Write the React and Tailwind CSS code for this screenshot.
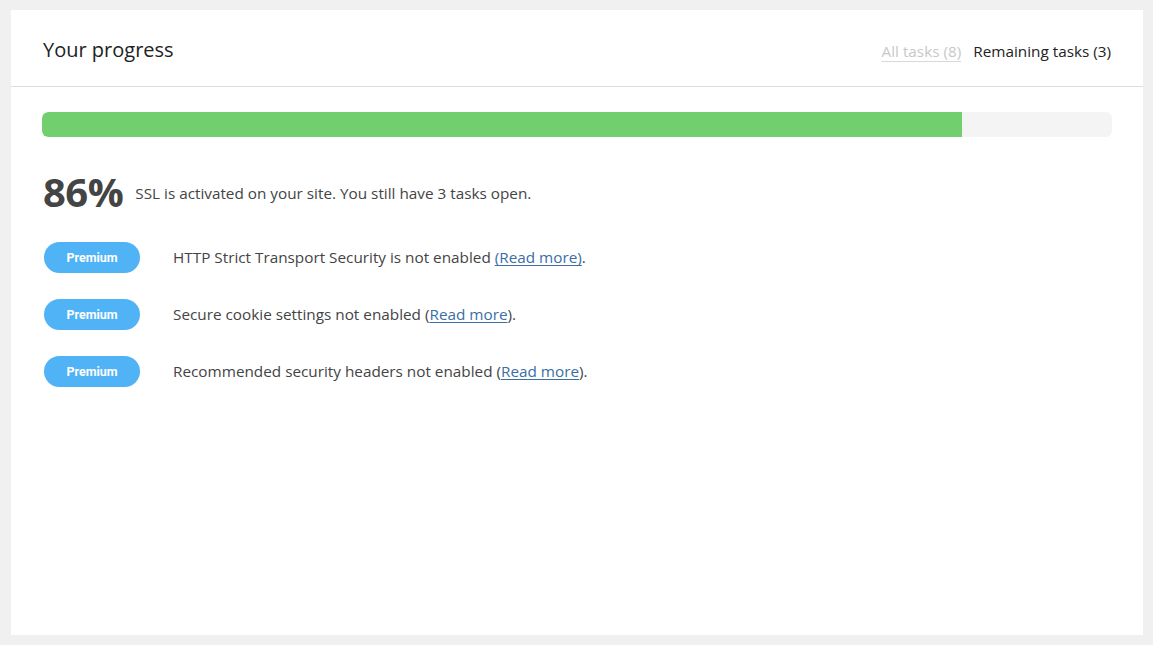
export default function App() {
  const tasks = [
    { pre: "HTTP Strict Transport Security is not enabled ", link: "(Read more)", post: "." },
    { pre: "Secure cookie settings not enabled (", link: "Read more", post: ")." },
    { pre: "Recommended security headers not enabled (", link: "Read more", post: ")." },
  ];
  return (
    <div className="w-[1153px] h-[645px] bg-[#eff0ef] pt-[10px] pl-[11px] pr-[10px] pb-[10px]" style={{ fontFamily: '"Open Sans", "Noto Sans", sans-serif' }}>
      <div className="h-[625px] bg-white">
        <div className="h-[77px] border-b border-[#dedede] flex items-center justify-between pl-[32px] pr-[32px] pt-[4px]">
          <h2 className="text-[20px] text-[#222]">Your progress</h2>
          <div className="flex items-center gap-[12px] text-[15.3px] pt-[2px]">
            <span className="text-[#c8c8c8] underline decoration-[#d8d8d8] underline-offset-[4px]">All tasks (8)</span>
            <span className="text-[#222]">Remaining tasks (3)</span>
          </div>
        </div>
        <div className="pl-[31px] pr-[31px] pt-[25px]">
          <div className="h-[25px] bg-[#f4f4f4] rounded-[6px] overflow-hidden">
            <div className="h-full bg-[#72cf6e] rounded-l-[6px] w-[86%]" />
          </div>
          <div className="flex items-center mt-[34px] h-[42px]">
            <span className="text-[40px] font-bold text-[#444] leading-none tracking-[-0.5px] ml-[1px]">86%</span>
            <span className="text-[15.3px] text-[#444] ml-[12px] pt-[2px]">SSL is activated on your site. You still have 3 tasks open.</span>
          </div>
          <div className="mt-[29px] flex flex-col gap-[26px]">
            {tasks.map((t, i) => (
              <div key={i} className="flex items-center h-[31px]">
                <span className="ml-[2px] w-[96px] h-[31px] rounded-full bg-[#4fb3f5] text-white text-[12.5px] font-bold flex items-center justify-center pt-[1px]" style={{ fontFamily: 'Roboto, "Open Sans", sans-serif' }}>Premium</span>
                <span className="ml-[33px] text-[15.3px] text-[#444]">
                  {t.pre}
                  <a href="#" className="text-[#3a6ea5] underline underline-offset-[2px]">{t.link}</a>
                  {t.post}
                </span>
              </div>
            ))}
          </div>
        </div>
      </div>
    </div>
  );
}
